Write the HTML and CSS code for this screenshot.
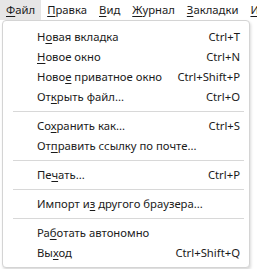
FILE: index.html
```html
<!DOCTYPE html>
<html lang="ru">

<head>
    <meta charset="UTF-8">
    <meta name="viewport" content="width=device-width, initial-scale=1.0">
    <title>Файл</title>
    <link rel="stylesheet" href="styles.css">
</head>

<body>
    <!-- строка меню -->
    <div class="menubar">
        <span class="top active"><u>Ф</u>айл</span>
        <span class="top"><u>П</u>равка</span>
        <span class="top"><u>В</u>ид</span>
        <span class="top"><u>Ж</u>урнал</span>
        <span class="top"><u>З</u>акладки</span>
        <span class="top"><u>И</u>нструменты</span>
    </div>

    <!-- выпадающее меню -->
    <ul class="menu">
        <li><span>Н<u>о</u>вая вкладка</span><span class="key">Ctrl+T</span></li>
        <li><span><u>Н</u>овое окно</span><span class="key">Ctrl+N</span></li>
        <li><span>Ново<u>е</u> приватное окно</span><span class="key">Ctrl+Shift+P</span></li>
        <li><span>От<u>к</u>рыть файл...</span><span class="key">Ctrl+O</span></li>
        <li class="sep"></li>
        <li><span>Со<u>х</u>ранить как...</span><span class="key">Ctrl+S</span></li>
        <li><span>От<u>п</u>равить ссылку по почте...</span></li>
        <li class="sep"></li>
        <li><span>Пе<u>ч</u>ать...</span><span class="key">Ctrl+P</span></li>
        <li class="sep"></li>
        <li><span>Импорт и<u>з</u> другого браузера...</span></li>
        <li class="sep"></li>
        <li><span>Ра<u>б</u>отать автономно</span></li>
        <li><span>Вы<u>х</u>од</span><span class="key">Ctrl+Shift+Q</span></li>
    </ul>
</body>

</html>
```

FILE: styles.css
```css
* {
    padding: 0;
    margin: 0;
}

body {
    background: #fff;
    font-family: "Noto Sans", "Liberation Sans", sans-serif;
    font-size: 11.3px;
    color: #1b1b1b;
    width: 257px;
    height: 269px;
    overflow: hidden;
}

u {
    text-decoration-thickness: 1px;
    text-underline-offset: 2px;
}

/* строка меню */
.menubar {
    display: flex;
    width: 257px;
    height: 20px;
    line-height: 20px;
    white-space: nowrap;
    overflow: hidden;
}

.menubar .top {
    flex: none;
    padding: 0 6px;
}

.menubar .top.active {
    background: #e6e6e6;
}

/* меню */
.menu {
    list-style: none;
    width: 246px;
    margin: 0 0 0 2px;
    padding: 6px 0 4px;
    background: #fff;
    border: 1px solid #d4d4d4;
    border-radius: 4px;
    box-shadow: 1px 2px 3px rgba(0, 0, 0, .15);
}

.menu li {
    display: flex;
    justify-content: space-between;
    height: 20px;
    line-height: 20px;
    padding: 0 9px 0 34px;
    white-space: nowrap;
}

.menu li.sep {
    height: 1px;
    margin: 4px 5px 4px 10px;
    padding: 0;
    background: #d8d8d8;
}
```
